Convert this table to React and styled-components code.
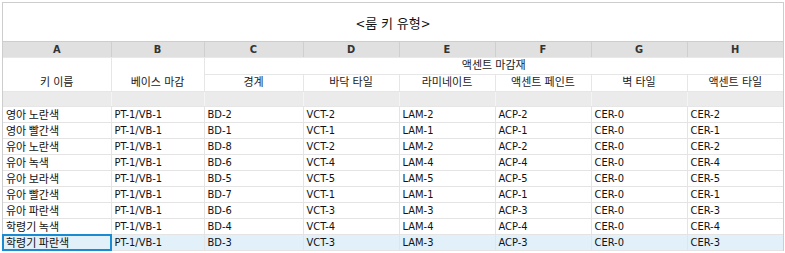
import React from "react";
import styled, { createGlobalStyle } from "styled-components";

const Global = createGlobalStyle`
  html, body { margin: 0; padding: 0; background: #fff; }
  body { font-family: "DejaVu Sans Condensed", "Noto Sans CJK KR", sans-serif; }
`;

const Frame = styled.div`
  margin: 2px 0 0 2px;
  width: 780px;
  border: 1px solid #cdcdcd;
  border-bottom: none;
  background: #fff;
`;

const Title = styled.div`
  height: 38px;
  display: flex;
  align-items: center;
  justify-content: center;
  font-family: "DejaVu Sans Condensed", "Noto Sans CJK KR", sans-serif;
  font-size: 13px;
  color: #111;
  border-bottom: 1px solid #cdcdcd;
`;

const Table = styled.table`
  width: 780px;
  table-layout: fixed;
  border-collapse: collapse;
  font-size: 11px;
  color: #111;
`;

const Row = styled.tr`
  background: ${(p) => (p.$selected ? "#e1f0f9" : "#fff")};
`;

const LetterCell = styled.th`
  height: 15px;
  padding: 0;
  background: #e0e0e0;
  border-right: 1px solid #cfcfcf;
  border-bottom: 1px solid #e8e8e8;
  font-weight: bold;
  font-size: 11px;
  color: #333;
  text-align: center;
  line-height: 15px;
  &:last-child { border-right: none; }
`;

const HeadCell = styled.th`
  height: ${(p) => p.$h || 15}px;
  padding: 0;
  font-weight: normal;
  color: #1a1a1a;
  text-align: center;
  vertical-align: ${(p) => (p.$bottom ? "bottom" : "middle")};
  line-height: 16px;
  border-right: 1px solid #e6e6e6;
  border-bottom: 1px solid #e6e6e6;
  &:last-child { border-right: none; }
`;

const BlankCell = styled.td`
  height: 14px;
  padding: 0;
  background: #ebebeb;
  border-right: 1px solid #f4f4f4;
  border-bottom: 1px solid #e6e6e6;
  &:last-child { border-right: none; }
`;

const Cell = styled.td`
  height: 15px;
  padding: 0 0 0 3px;
  line-height: 15px;
  white-space: nowrap;
  overflow: visible;
  border-right: 1px solid #e4e4e4;
  border-bottom: 1px solid #e4e4e4;
  position: relative;
  &:last-child { border-right: none; }
`;

const KeyCell = styled(Cell)`
  font-family: "Noto Sans CJK KR", sans-serif;
  font-size: 11px;
  padding-left: 3px;
`;

const Focus = styled.span`
  position: absolute;
  left: -1px;
  top: -1px;
  right: -1px;
  bottom: -1px;
  border: 2px solid #1a8bd0;
  z-index: 2;
  pointer-events: none;
`;

const widths = [108, 93, 99, 96, 96, 96, 96, 96];
const letters = ["A", "B", "C", "D", "E", "F", "G", "H"];

const rows = [
  ["영아 노란색", "PT-1/VB-1", "BD-2", "VCT-2", "LAM-2", "ACP-2", "CER-0", "CER-2"],
  ["영아 빨간색", "PT-1/VB-1", "BD-1", "VCT-1", "LAM-1", "ACP-1", "CER-0", "CER-1"],
  ["유아 노란색", "PT-1/VB-1", "BD-8", "VCT-2", "LAM-2", "ACP-2", "CER-0", "CER-2"],
  ["유아 녹색", "PT-1/VB-1", "BD-6", "VCT-4", "LAM-4", "ACP-4", "CER-0", "CER-4"],
  ["유아 보라색", "PT-1/VB-1", "BD-5", "VCT-5", "LAM-5", "ACP-5", "CER-0", "CER-5"],
  ["유아 빨간색", "PT-1/VB-1", "BD-7", "VCT-1", "LAM-1", "ACP-1", "CER-0", "CER-1"],
  ["유아 파란색", "PT-1/VB-1", "BD-6", "VCT-3", "LAM-3", "ACP-3", "CER-0", "CER-3"],
  ["학령기 녹색", "PT-1/VB-1", "BD-4", "VCT-4", "LAM-4", "ACP-4", "CER-0", "CER-4"],
  ["학령기 파란색", "PT-1/VB-1", "BD-3", "VCT-3", "LAM-3", "ACP-3", "CER-0", "CER-3"],
];

const subHeads = ["경계", "바닥 타일", "라미네이트", "액센트 페인트", "벽 타일", "액센트 타일"];

export default function App() {
  return (
    <>
      <Global />
      <Frame>
        <Title>&lt;룸 키 유형&gt;</Title>
        <Table>
          <colgroup>
            {widths.map((w, i) => (
              <col key={i} style={{ width: w }} />
            ))}
          </colgroup>
          <thead>
            <tr>
              {letters.map((l) => (
                <LetterCell key={l}>{l}</LetterCell>
              ))}
            </tr>
            <tr>
              <HeadCell rowSpan={2} $bottom>키 이름</HeadCell>
              <HeadCell rowSpan={2} $bottom>베이스 마감</HeadCell>
              <HeadCell colSpan={6}>액센트 마감재</HeadCell>
            </tr>
            <tr>
              {subHeads.map((h) => (
                <HeadCell key={h} $h={16}>{h}</HeadCell>
              ))}
            </tr>
          </thead>
          <tbody>
            <tr>
              {letters.map((l) => (
                <BlankCell key={l} />
              ))}
            </tr>
            {rows.map((r, i) => {
              const sel = i === rows.length - 1;
              return (
                <Row key={i} $selected={sel}>
                  <KeyCell>
                    {r[0]}
                    {sel && <Focus />}
                  </KeyCell>
                  {r.slice(1).map((v, j) => (
                    <Cell key={j}>{v}</Cell>
                  ))}
                </Row>
              );
            })}
          </tbody>
        </Table>
      </Frame>
    </>
  );
}
